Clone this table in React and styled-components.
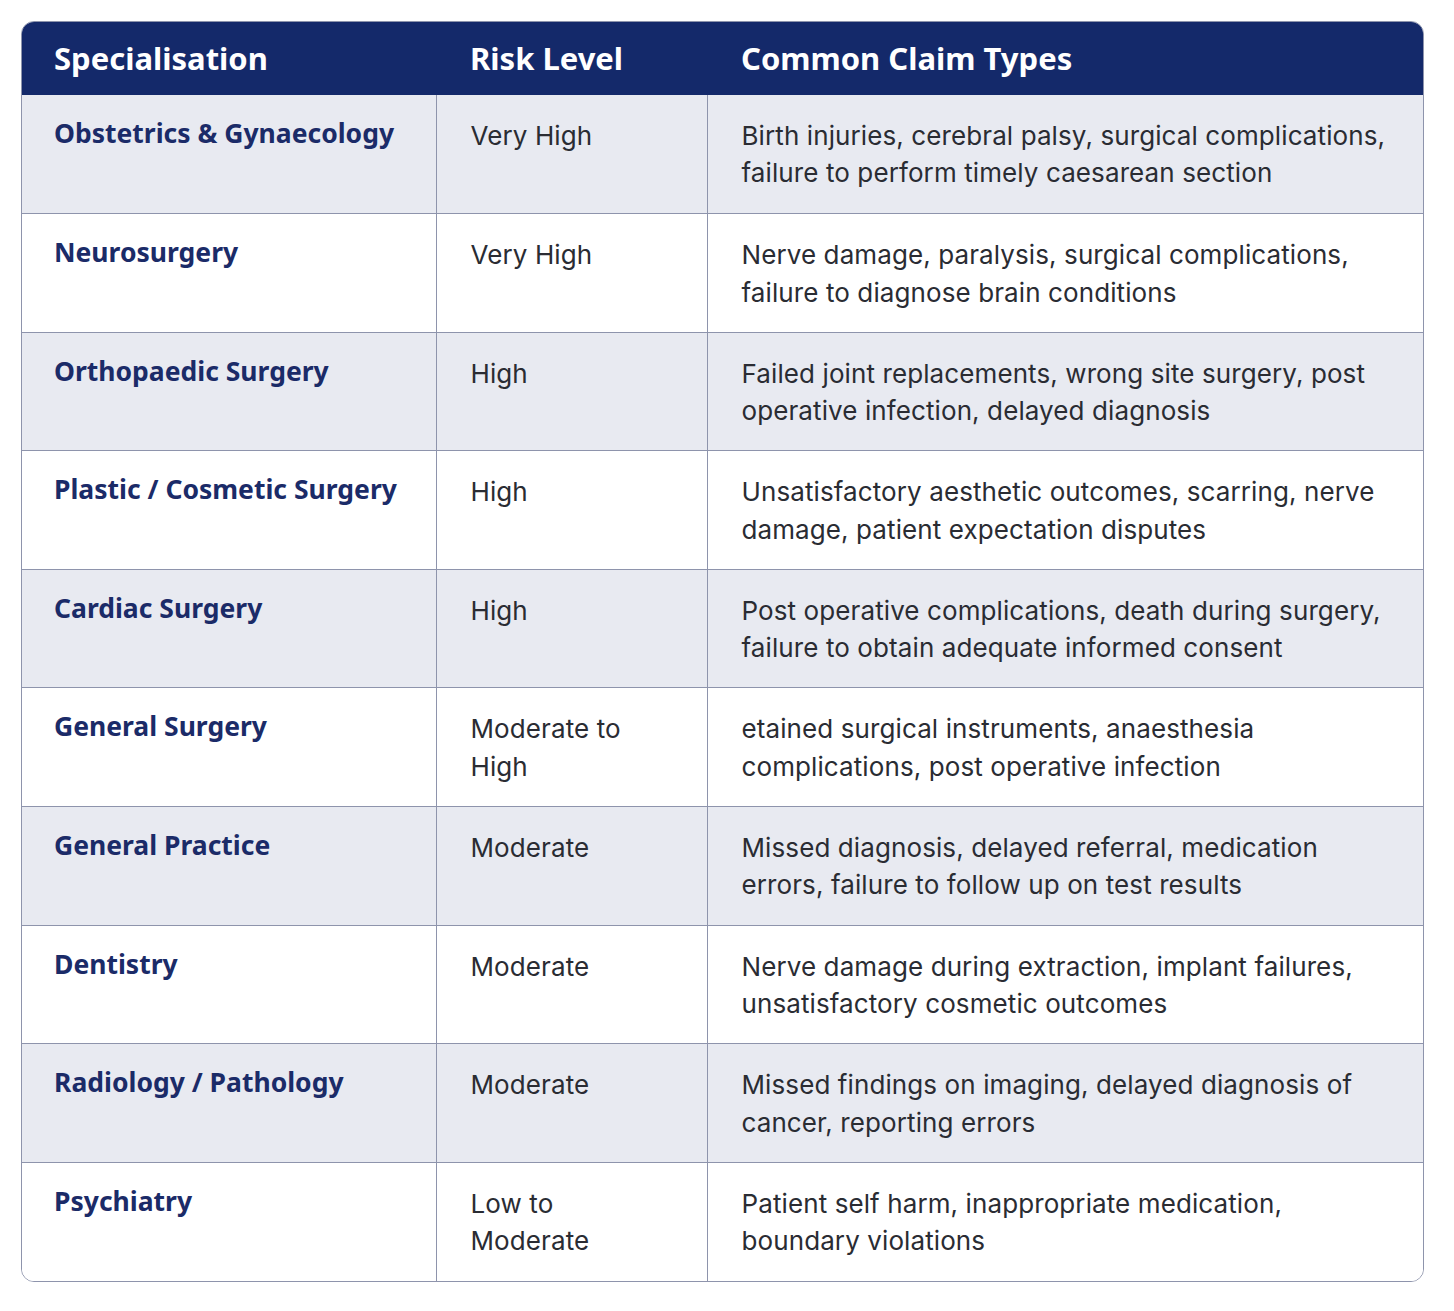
import React from 'react';
import styled, { createGlobalStyle } from 'styled-components';

const GlobalStyle = createGlobalStyle`
  body {
    margin: 0;
    background: #ffffff;
    font-family: Inter, "Liberation Sans", sans-serif;
  }
`;

const rows = [
  { spec: 'Obstetrics & Gynaecology', risk: 'Very High', claims: 'Birth injuries, cerebral palsy, surgical complications, failure to perform timely caesarean section' },
  { spec: 'Neurosurgery', risk: 'Very High', claims: 'Nerve damage, paralysis, surgical complications, failure to diagnose brain conditions' },
  { spec: 'Orthopaedic Surgery', risk: 'High', claims: 'Failed joint replacements, wrong site surgery, post operative infection, delayed diagnosis' },
  { spec: 'Plastic / Cosmetic Surgery', risk: 'High', claims: 'Unsatisfactory aesthetic outcomes, scarring, nerve damage, patient expectation disputes' },
  { spec: 'Cardiac Surgery', risk: 'High', claims: 'Post operative complications, death during surgery, failure to obtain adequate informed consent' },
  { spec: 'General Surgery', risk: 'Moderate to High', claims: 'etained surgical instruments, anaesthesia complications, post operative infection' },
  { spec: 'General Practice', risk: 'Moderate', claims: 'Missed diagnosis, delayed referral, medication errors, failure to follow up on test results' },
  { spec: 'Dentistry', risk: 'Moderate', claims: 'Nerve damage during extraction, implant failures, unsatisfactory cosmetic outcomes' },
  { spec: 'Radiology / Pathology', risk: 'Moderate', claims: 'Missed findings on imaging, delayed diagnosis of cancer, reporting errors' },
  { spec: 'Psychiatry', risk: 'Low to Moderate', claims: 'Patient self harm, inappropriate medication, boundary violations' },
];

export default function App() {
  return (
    <Page>
      <GlobalStyle />
      <Frame>
        <Table>
          <colgroup>
            <col style={{ width: 414 }} />
            <col style={{ width: 271 }} />
            <col />
          </colgroup>
          <thead>
            <tr>
              <Th>Specialisation</Th>
              <Th>Risk Level</Th>
              <Th>Common Claim Types</Th>
            </tr>
          </thead>
          <tbody>
            {rows.map((r, i) => (
              <Row key={r.spec} $striped={i % 2 === 0}>
                <Label>{r.spec}</Label>
                <Cell $narrow>{r.risk}</Cell>
                <Cell>{r.claims}</Cell>
              </Row>
            ))}
          </tbody>
        </Table>
      </Frame>
    </Page>
  );
}

const Page = styled.div`
  padding: 21px 30px 29px 21px;
`;

const Frame = styled.div`
  border: 1px solid #8e94ac;
  border-radius: 13px;
  overflow: hidden;
  width: 1401px;
`;

const Table = styled.table`
  width: 100%;
  table-layout: fixed;
  border-collapse: collapse;
`;

const Th = styled.th`
  background: #14296a;
  color: #ffffff;
  text-align: left;
  font-family: "Noto Sans", "Open Sans", sans-serif;
  font-weight: 700;
  font-size: 31px;
  line-height: 38px;
  padding: 17px 20px 18px 32px;
  &:nth-child(2), &:nth-child(3) {
    padding-left: 34px;
  }
`;

const Row = styled.tr`
  height: 118.6px;
  background: ${p => (p.$striped ? '#e8eaf1' : '#ffffff')};
  border-top: 1px solid #8e94ac;
  &:first-child {
    border-top: none;
  }
  td + td {
    border-left: 1px solid #8e94ac;
  }
`;

const Cell = styled.td`
  vertical-align: top;
  font-family: Inter, "Liberation Sans", sans-serif;
  font-size: 26px;
  letter-spacing: 0.1px;
  line-height: 37.4px;
  color: #2a2c33;
  padding: 22px ${p => (p.$narrow ? '40px' : '30px')} 20px 34px;
`;

const Label = styled.td`
  vertical-align: top;
  font-family: "Noto Sans", "Open Sans", sans-serif;
  font-weight: 700;
  font-size: 26.5px;
  line-height: 37.4px;
  color: #1b2b68;
  padding: 20px 20px 20px 32px;
`;
